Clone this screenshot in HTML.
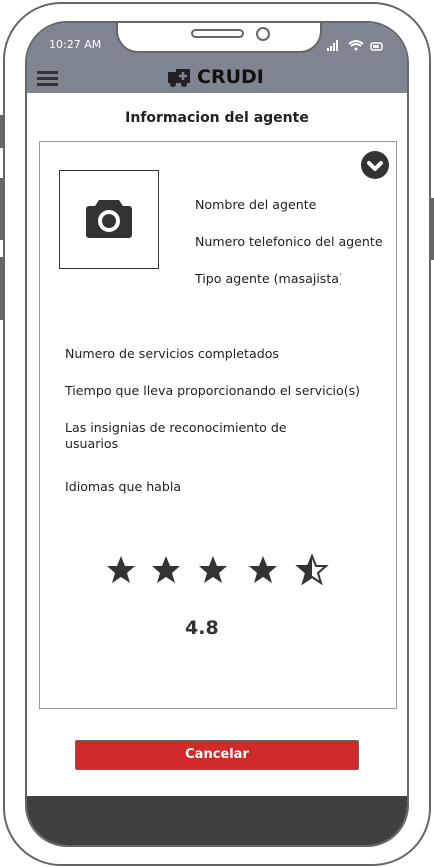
<!DOCTYPE html>
<html><head><meta charset="utf-8"><style>
*{margin:0;padding:0;box-sizing:border-box}
body{width:434px;height:867px;background:#fff;position:relative;overflow:hidden;font-family:"DejaVu Sans","Liberation Sans",sans-serif;color:#222}
.abs{position:absolute}
.phone{left:3px;top:2px;width:428px;height:864px;border:2px solid #666;border-radius:58px;background:#fff}
.screen{left:25px;top:21px;width:384px;height:826px;border:2px solid #666;border-radius:42px;overflow:hidden;background:#fff}
.hdr{left:0;top:0;width:100%;height:70px;background:#7f8491}
.notch{left:89px;top:-4px;width:206px;height:34px;background:#fff;border:2px solid #666;border-top:none;border-radius:0 0 22px 22px}
.bot{left:0;top:773px;width:100%;height:60px;background:#404040}
.btn{background:#666;width:4px}
.t{font-size:12.6px;color:#222}
</style></head><body>
<div class="abs btn" style="left:0;top:115px;height:33px"></div>
<div class="abs btn" style="left:0;top:178px;height:62px"></div>
<div class="abs btn" style="left:0;top:257px;height:63px"></div>
<div class="abs btn" style="left:430px;top:198px;height:62px"></div>
<div class="abs phone"></div>
<div class="abs screen">
 <div class="abs hdr"></div>
 <div class="abs notch"></div>
 <div class="abs bot"></div>
 <div class="abs" style="left:22px;top:15px;font-size:11px;color:#fff">10:27 AM</div>
 <div class="abs" style="left:10px;top:48px;width:21px;height:3px;background:#333;box-shadow:0 6px 0 #333,0 12px 0 #333"></div>
 <svg class="abs" style="left:141px;top:46px" width="22" height="18"><path d="M0 3 h8 v-3 h14 v14 h-22z" fill="#222"/><circle cx="5" cy="15" r="3" fill="#222"/><circle cx="16" cy="15" r="3" fill="#222"/><path d="M15 3 v8 M11 7 h8" stroke="#7f8491" stroke-width="2.5"/></svg>
 <div class="abs" style="left:170px;top:43px;font-size:19px;font-weight:bold;color:#111">CRUDI</div>
 <svg class="abs" style="left:300px;top:16px" width="60" height="14"><rect x="0" y="9" width="2" height="3" fill="#fff"/><rect x="3" y="7" width="2" height="5" fill="#fff"/><rect x="6" y="4" width="2" height="8" fill="#fff"/><rect x="9" y="1" width="2" height="11" fill="#fff"/><path d="M22 5 Q29 -1 36 5 M24 7 Q29 3 34 7" stroke="#fff" stroke-width="2" fill="none"/><circle cx="29" cy="10" r="1.5" fill="#fff"/><rect x="44" y="4" width="11" height="7" rx="2" stroke="#fff" stroke-width="1.5" fill="none"/><rect x="46" y="6" width="6" height="3" fill="#fff"/></svg>
</div>
<div class="abs" style="left:191px;top:29px;width:53px;height:9px;border:2px solid #666;border-radius:5px"></div>
<div class="abs" style="left:256px;top:27px;width:14px;height:14px;border:2px solid #666;border-radius:50%"></div>
<div class="abs" style="left:0;width:434px;top:110px;text-align:center;font-size:14px;font-weight:bold;color:#222">Informacion del agente</div>
<div class="abs" style="left:39px;top:141px;width:358px;height:568px;border:1px solid #999"></div>
<svg class="abs" style="left:361px;top:151px" width="28" height="28"><circle cx="14" cy="14" r="14" fill="#333"/><path d="M8 12 L14 18 L20 12" stroke="#fff" stroke-width="4" fill="none" stroke-linecap="round" stroke-linejoin="round"/></svg>
<div class="abs" style="left:59px;top:170px;width:100px;height:99px;border:1px solid #333"></div>
<svg class="abs" style="left:85px;top:197px" width="48" height="42"><path d="M14 3 h20 l4 6 h6 a3 3 0 0 1 3 3 v26 a3 3 0 0 1 -3 3 h-40 a3 3 0 0 1 -3 -3 v-26 a3 3 0 0 1 3 -3 h6z" fill="#333"/><circle cx="24" cy="24" r="9" fill="none" stroke="#fff" stroke-width="4"/></svg>
<div class="abs t" style="left:195px;top:197px">Nombre del agente</div>
<div class="abs t" style="left:195px;top:234px">Numero telefonico del agente</div>
<div class="abs t" style="left:195px;top:271px;width:146px;overflow:hidden;white-space:nowrap">Tipo agente (masajista)</div>
<div class="abs t" style="left:65px;top:346px">Numero de servicios completados</div>
<div class="abs t" style="left:65px;top:383px">Tiempo que lleva proporcionando el servicio(s)</div>
<div class="abs t" style="left:65px;top:420px;width:250px;line-height:16px">Las insignias de reconocimiento de usuarios</div>
<div class="abs t" style="left:65px;top:479px">Idiomas que habla</div>
<svg class="abs" style="left:100px;top:552px" width="240" height="40">
<defs><path id="s" d="M15 1 L19 11 L29 11 L21 18 L24 28 L15 22 L6 28 L9 18 L1 11 L11 11Z"/></defs>
<use href="#s" x="6" y="3" fill="#333"/><use href="#s" x="51" y="3" fill="#333"/><use href="#s" x="98" y="3" fill="#333"/><use href="#s" x="148" y="3" fill="#333"/>
<use href="#s" x="197" y="3" fill="#fff" stroke="#333" stroke-width="2"/>
<path d="M212 4 L208 14 L198 14 L206 21 L203 31 L212 25Z" fill="#333"/>
</svg>
<div class="abs" style="left:185px;top:617px;font-size:19px;font-weight:bold;color:#333">4.8</div>
<div class="abs" style="left:75px;top:740px;width:284px;height:30px;background:#d02a2a;border:1px solid #666;border-radius:2px;color:#fff;font-size:13px;font-weight:bold;text-align:center;line-height:28px">Cancelar</div>
</body></html>
